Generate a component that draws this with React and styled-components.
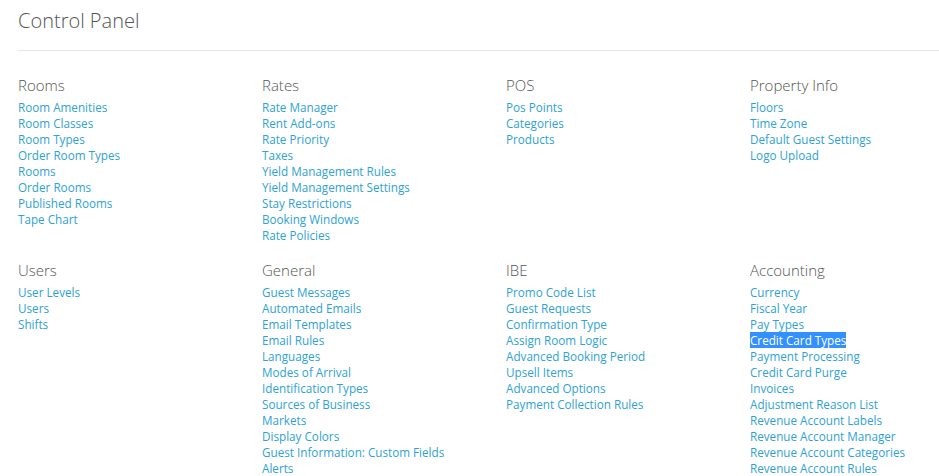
import styled, { createGlobalStyle } from "styled-components";

const Global = createGlobalStyle`
	body {
		margin: 0;
		background: #fff;
		font-family: "Open Sans", "Liberation Sans", sans-serif;
	}
`;

const Page = styled.div`
	padding: 7px 0 0 18px;
`;

const Title = styled.h1`
	margin: 0 0 15px;
	font-size: 20px;
	line-height: 28px;
	font-weight: 300;
	color: #555;
`;

const Rule = styled.div`
	height: 1px;
	background: #e6e6e6;
`;

const Grid = styled.div`
	display: grid;
	grid-template-columns: repeat(4, 244px);
	row-gap: 17px;
	margin-top: 24px;
`;

const Section = styled.div`
	display: flex;
	flex-direction: column;
	align-items: flex-start;
`;

const Heading = styled.h3`
	margin: 0 0 4px;
	font-size: 15px;
	line-height: 20px;
	font-weight: 300;
	color: #555;
`;

const Link = styled.a`
	font-size: 11.7px;
	line-height: 16px;
	color: ${(p) => (p.$selected ? "#fff" : "#2ea2d6")};
	background: ${(p) => (p.$selected ? "#3390ff" : "transparent")};
	text-decoration: none;
	cursor: pointer;
`;

const sections = [
	{
		title: "Rooms",
		links: ["Room Amenities", "Room Classes", "Room Types", "Order Room Types", "Rooms", "Order Rooms", "Published Rooms", "Tape Chart"],
	},
	{
		title: "Rates",
		links: ["Rate Manager", "Rent Add-ons", "Rate Priority", "Taxes", "Yield Management Rules", "Yield Management Settings", "Stay Restrictions", "Booking Windows", "Rate Policies"],
	},
	{ title: "POS", links: ["Pos Points", "Categories", "Products"] },
	{ title: "Property Info", links: ["Floors", "Time Zone", "Default Guest Settings", "Logo Upload"] },
	{ title: "Users", links: ["User Levels", "Users", "Shifts"] },
	{
		title: "General",
		links: ["Guest Messages", "Automated Emails", "Email Templates", "Email Rules", "Languages", "Modes of Arrival", "Identification Types", "Sources of Business", "Markets", "Display Colors", "Guest Information: Custom Fields", "Alerts"],
	},
	{
		title: "IBE",
		links: ["Promo Code List", "Guest Requests", "Confirmation Type", "Assign Room Logic", "Advanced Booking Period", "Upsell Items", "Advanced Options", "Payment Collection Rules"],
	},
	{
		title: "Accounting",
		links: ["Currency", "Fiscal Year", "Pay Types", "Credit Card Types", "Payment Processing", "Credit Card Purge", "Invoices", "Adjustment Reason List", "Revenue Account Labels", "Revenue Account Manager", "Revenue Account Categories", "Revenue Account Rules"],
	},
];

const App = () => {
	return (
		<Page>
			<Global />
			<Title>Control Panel</Title>
			<Rule />
			<Grid>
				{sections.map((s) => (
					<Section key={s.title}>
						<Heading>{s.title}</Heading>
						{s.links.map((l) => (
							<Link key={l} $selected={l === "Credit Card Types"}>
								{l}
							</Link>
						))}
					</Section>
				))}
			</Grid>
		</Page>
	);
};

export default App;
